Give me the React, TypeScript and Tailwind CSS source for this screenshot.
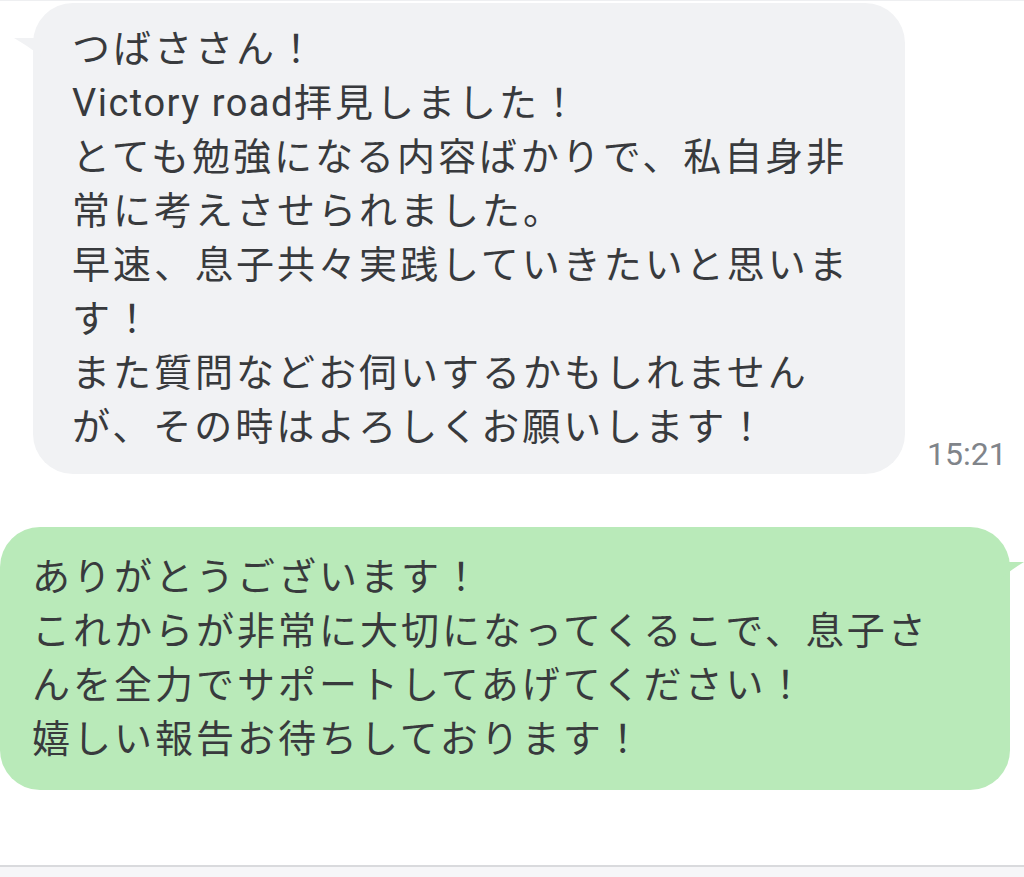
import type { ReactNode } from 'react';

const grayLines: ReactNode[] = [
  'つばささん！',
  <>
    <span className="tracking-[1.5px]">Victory road</span>拝見しました！
  </>,
  'とても勉強になる内容ばかりで、私自身非',
  '常に考えさせられました。',
  '早速、息子共々実践していきたいと思いま',
  'す！',
  'また質問などお伺いするかもしれません',
  'が、その時はよろしくお願いします！',
];

const greenLines = [
  'ありがとうございます！',
  'これからが非常に大切になってくるこで、息子さ',
  'んを全力でサポートしてあげてください！',
  '嬉しい報告お待ちしております！',
];

function Lines({ lines }: { lines: ReactNode[] }) {
  return (
    <div className="text-[38px] leading-[54px] tracking-[3px] text-[#383a3d]">
      {lines.map((line, i) => (
        <div key={i} className="whitespace-nowrap">
          {line}
        </div>
      ))}
    </div>
  );
}

export default function App() {
  return (
    <div
      className="w-[1024px] h-[877px] bg-white flex flex-col overflow-hidden"
      style={{ fontFamily: 'Roboto, "Noto Sans CJK JP", sans-serif' }}
    >
      <div className="h-[3px] border-t border-[#eeeff1]" />

      {/* incoming */}
      <div className="flex items-end">
        <div className="relative ml-[33px] w-[872px] rounded-[40px] bg-[#f1f2f4] pl-[39px] pt-[19px] pb-[20px]">
          <svg className="absolute left-[-19px] top-[32px]" width="32" height="26" viewBox="0 0 32 26">
            <path d="M0 3 L24 3 C26 3 28 4 32 6 L32 26 C24 18 12 10 0 3 Z" fill="#f1f2f4" />
          </svg>
          <Lines lines={grayLines} />
        </div>
        <div className="ml-[22px] pb-[2px] text-[32px] leading-[36px] text-[#80848a]">15:21</div>
      </div>

      {/* outgoing */}
      <div className="mt-[53px] flex">
        <div className="relative w-[1010px] rounded-[40px] bg-[#b9eab9] pl-[32px] pt-[23px] pb-[24px]">
          <svg className="absolute right-[-14px] top-[30px]" width="28" height="26" viewBox="0 0 28 26">
            <path d="M28 5 L8 5 C6 5 3 6 0 8 L0 26 C8 18 18 11 28 5 Z" fill="#b9eab9" />
          </svg>
          <Lines lines={greenLines} />
        </div>
      </div>

      <div className="flex-1" />
      <div className="h-[12px] border-t-2 border-[#d9dadd] bg-[#f6f6f8]" />
    </div>
  );
}
